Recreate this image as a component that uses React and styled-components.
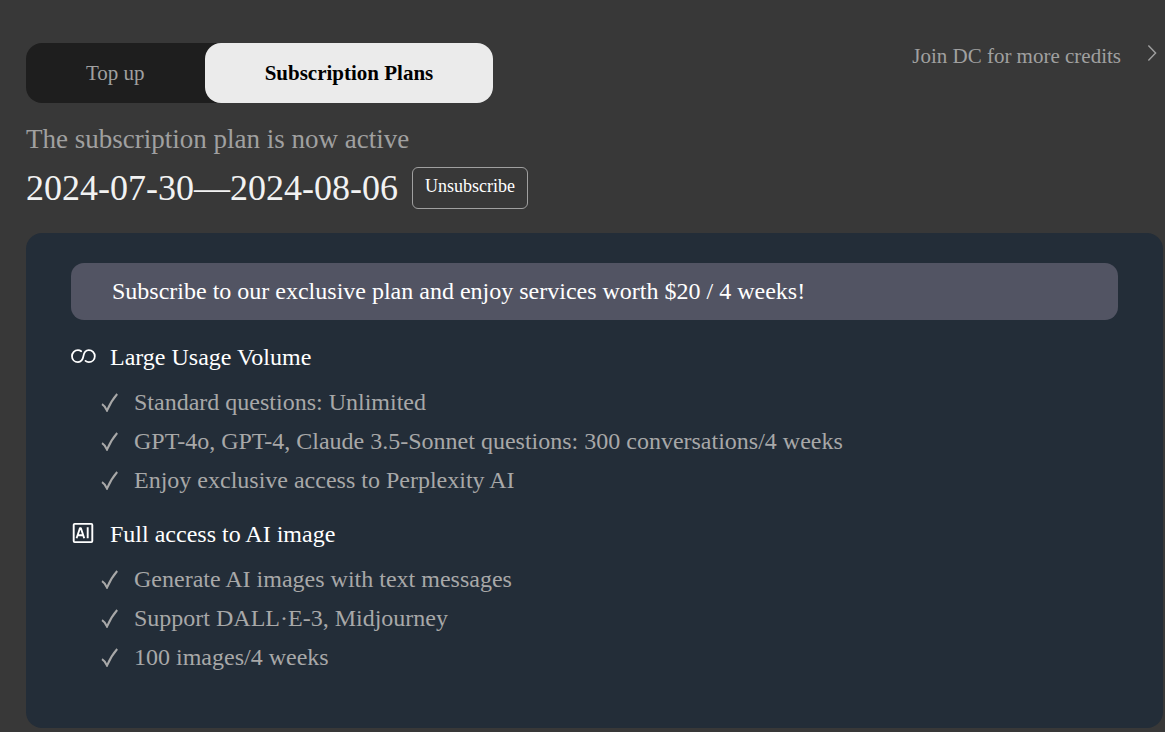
import React, { useState } from 'react'
import styled, { createGlobalStyle } from 'styled-components'

const GlobalStyle = createGlobalStyle`
  * {
    box-sizing: border-box;
  }
  body {
    margin: 0;
    background: #383838;
    font-family: 'Liberation Serif', 'Times New Roman', serif;
  }
  button {
    font-family: inherit;
    cursor: pointer;
  }
`

const Page = styled.main`
  padding: 43px 2px 4px 26px;
`

const Header = styled.header`
  display: flex;
  justify-content: space-between;
  align-items: flex-start;
`

const Tabs = styled.div`
  display: flex;
  border-radius: 16px;
  background: #1e1e1e;
`

const Tab = styled.button`
  height: 60px;
  padding: 0 60px;
  border: 0;
  border-radius: 16px;
  background: ${props => props.$active ? '#ebebeb' : 'transparent'};
  color: ${props => props.$active ? '#000' : '#a0a0a0'};
  font-size: 21px;
  font-weight: ${props => props.$active ? 700 : 400};
`

const JoinLink = styled.a`
  display: flex;
  gap: 26px;
  padding-right: 6px;
  color: #a0a0a0;
  font-size: 21px;
  line-height: 26px;
  text-decoration: none;
`

const Status = styled.p`
  margin: 20px 0 0;
  color: #a0a0a0;
  font-size: 27px;
  line-height: 32px;
`

const Period = styled.div`
  display: flex;
  align-items: center;
  gap: 14px;
  margin-top: 12px;
`

const Dates = styled.h1`
  margin: 0;
  color: #f2f2f2;
  font-size: 36px;
  font-weight: 400;
  line-height: 42px;
`

const Unsubscribe = styled.button`
  height: 42px;
  padding: 0 12px 4px;
  border: 1px solid #a0a0a0;
  border-radius: 6px;
  background: transparent;
  color: #fff;
  font-size: 18px;
`

const Panel = styled.section`
  margin-top: 24px;
  padding: 30px 45px 57px;
  border-radius: 16px;
  background: #232d38;
`

const Banner = styled.p`
  margin: 0 0 22px;
  padding: 14px 41px;
  border-radius: 13px;
  background: #525463;
  color: #fff;
  font-size: 24px;
  line-height: 29px;
`

const Feature = styled.div`
  & + & {
    margin-top: 25px;
  }
`

const FeatureTitle = styled.h2`
  display: flex;
  align-items: center;
  gap: 14px;
  margin: 0 0 16px;
  color: #fff;
  font-size: 24px;
  font-weight: 400;
  line-height: 30px;
`

const List = styled.ul`
  display: flex;
  flex-direction: column;
  gap: 11px;
  margin: 0;
  padding: 0 0 0 30px;
  list-style: none;
`

const Item = styled.li`
  display: flex;
  align-items: center;
  gap: 15px;
  color: #a8a8a8;
  font-size: 24px;
  line-height: 28px;
`

const Icon = styled.svg`
  flex: none;
  fill: none;
  stroke: currentColor;
`

const InfinityIcon = () => (
  <Icon width="25" height="24" viewBox="0 0 25 24" strokeWidth="1.8" strokeLinecap="round" aria-hidden="true">
    <path d="M10.2 6.2C9.3 5.5 8.2 5.1 7 5.1C3.6 5.1 1 7.7 1 11.2C1 14.7 3.6 17.1 7 17.1C10 17.1 11.8 14.8 12.4 11.2C13 7.5 14.8 5.1 17.8 5.1C21.2 5.1 23.8 7.7 23.8 11.2C23.8 14.7 21.2 17.1 17.8 17.1C16.5 17.1 15.4 16.7 14.5 15.9" />
  </Icon>
)

const AiIcon = () => (
  <Icon width="25" height="24" viewBox="0 0 25 24" strokeWidth="1.9" strokeLinejoin="round" aria-hidden="true">
    <rect x="2.7" y="1.9" width="18.6" height="18.2" rx="1" />
    <path d="M5.6 16.3L8.9 6.2H9.9L13.2 16.3M6.8 13.2H12M16.7 5.3V16.3" />
  </Icon>
)

const CheckIcon = () => (
  <Icon width="18" height="20" viewBox="0 0 18 20" strokeWidth="2" aria-hidden="true">
    <path d="M1 12.2Q4 14 6 18.6Q10 9 16.2 2" />
  </Icon>
)

const ArrowIcon = () => (
  <Icon width="10" height="20" viewBox="0 0 10 20" strokeWidth="1.4" aria-hidden="true">
    <path d="M1.4 2.5L8.6 10L1.4 17.5" />
  </Icon>
)

const features = [
  {
    title: 'Large Usage Volume',
    icon: InfinityIcon,
    items: [
      'Standard questions: Unlimited',
      'GPT-4o, GPT-4, Claude 3.5-Sonnet questions: 300 conversations/4 weeks',
      'Enjoy exclusive access to Perplexity AI'
    ]
  },
  {
    title: 'Full access to AI image',
    icon: AiIcon,
    items: [
      'Generate AI images with text messages',
      'Support DALL·E-3, Midjourney',
      '100 images/4 weeks'
    ]
  }
]

const tabs = ['Top up', 'Subscription Plans']

const App = () => {
  const [active, setActive] = useState('Subscription Plans')

  return (
    <Page>
      <GlobalStyle />
      <Header>
        <Tabs role="tablist">
          {tabs.map(tab =>
            <Tab
              key={tab}
              role="tab"
              aria-selected={tab === active}
              $active={tab === active}
              onClick={() => setActive(tab)}
            >
              {tab}
            </Tab>
          )}
        </Tabs>
        <JoinLink href="#join">
          Join DC for more credits
          <ArrowIcon />
        </JoinLink>
      </Header>
      <Status>The subscription plan is now active</Status>
      <Period>
        <Dates>2024-07-30—2024-08-06</Dates>
        <Unsubscribe>Unsubscribe</Unsubscribe>
      </Period>
      <Panel>
        <Banner>Subscribe to our exclusive plan and enjoy services worth $20 / 4 weeks!</Banner>
        {features.map(({ title, icon: FeatureIcon, items }) =>
          <Feature key={title}>
            <FeatureTitle>
              <FeatureIcon />
              {title}
            </FeatureTitle>
            <List>
              {items.map(item =>
                <Item key={item}>
                  <CheckIcon />
                  {item}
                </Item>
              )}
            </List>
          </Feature>
        )}
      </Panel>
    </Page>
  )
}

export default App
